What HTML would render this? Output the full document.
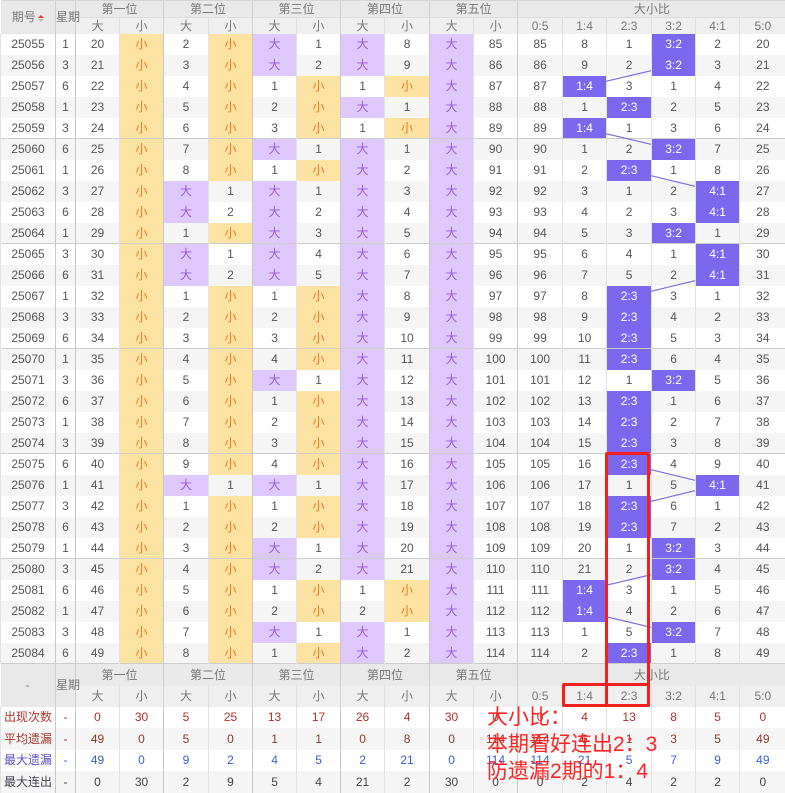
<!DOCTYPE html>
<html><head><meta charset="utf-8"><style>
*{margin:0;padding:0;box-sizing:border-box}
body{width:785px;height:791px;overflow:hidden;background:#fff;font-family:"Liberation Sans","Noto Sans CJK SC",sans-serif;font-size:12px;color:#555;position:relative}
table{border-collapse:collapse;table-layout:fixed;width:785px;position:absolute;left:0;top:0}
td,th{padding:0;text-align:center;white-space:nowrap;overflow:visible;font-weight:normal;border-left:1px solid #e2e2e2;line-height:14px}
thead th,.fh th{background:#e9e9e9;color:#777;border-left:1px solid #cfcfcf}
.h1 th{height:17px;border-top:1px solid #d5d5d5}
.h2 th{height:16px;background:#efefef;border-left:1px solid #dedede;border-top:1px solid #dcdcdc}
.h2 th.L{border-left:1px solid #cfcfcf}
tbody tr{height:21px}
tbody tr:nth-child(even){background:#f5f5f5}
tbody tr.s td{border-top:1px solid #cdcdcd}
tbody td:nth-child(2),tbody td:nth-child(3),tbody td:nth-child(5),tbody td:nth-child(7),tbody td:nth-child(9),tbody td:nth-child(11),tbody td:nth-child(13){border-left:1px solid #c8c8c8}
td.y{background:#fde3a2;color:#f0781e}
td.p{background:#dfc8fb;color:#9a5ad8}
td.b{background:#7b68ee;color:#fff}
.fh th{height:22px}
.fh2 th{height:21px;background:#efefef}
.st tr{height:21.5px}
.st td{height:21.5px}
.st tr:nth-child(even){background:#f5f5f5}
.r1 td{color:#b0302a}.r2 td{color:#8b3a2a}.r3 td{color:#3a5fcd}.r4 td{color:#444}
.r1 td:first-child,.r2 td:first-child{color:#a8362c}.r3 td:first-child{color:#5a50c0}.r4 td:first-child{color:#445}
.sort{display:inline-block;width:6px;vertical-align:middle;margin-left:2px;line-height:0}
.sort i{display:block;width:0;height:0;border-left:3px solid transparent;border-right:3px solid transparent}
.redbox{position:absolute;border:3px solid #f32020;border-radius:2px}
.note{position:absolute;left:487px;top:704px;color:#ff2424;font-size:21px;line-height:27px;font-family:"Liberation Sans","Noto Sans CJK SC",sans-serif}
svg{position:absolute;left:0;top:0}
</style></head><body>
<table>
<colgroup><col style="width:55px"><col style="width:20px"><col style="width:44px"><col style="width:44px"><col style="width:45px"><col style="width:44px"><col style="width:44px"><col style="width:44px"><col style="width:44px"><col style="width:45px"><col style="width:44px"><col style="width:44px"><col style="width:45px"><col style="width:44px"><col style="width:45px"><col style="width:44px"><col style="width:44px"><col style="width:46px"></colgroup>
<thead>
<tr class="h1"><th rowspan="2" style="border-left:none">期号<span class="sort"><i style="border-bottom:3px solid #e33;margin-bottom:1px"></i><i style="border-top:3px solid #bbb"></i></span></th><th rowspan="2">星期</th><th colspan="2">第一位</th><th colspan="2">第二位</th><th colspan="2">第三位</th><th colspan="2">第四位</th><th colspan="2">第五位</th><th colspan="6">大小比</th></tr>
<tr class="h2"><th class="L">大</th><th>小</th><th class="L">大</th><th>小</th><th class="L">大</th><th>小</th><th class="L">大</th><th>小</th><th class="L">大</th><th>小</th><th class="L">0:5</th><th>1:4</th><th>2:3</th><th>3:2</th><th>4:1</th><th>5:0</th></tr>
</thead>
<tbody>
<tr><td>25055</td><td>1</td><td>20</td><td class="y">小</td><td>2</td><td class="y">小</td><td class="p">大</td><td>1</td><td class="p">大</td><td>8</td><td class="p">大</td><td>85</td><td>85</td><td>8</td><td>1</td><td class="b">3:2</td><td>2</td><td>20</td></tr>
<tr><td>25056</td><td>3</td><td>21</td><td class="y">小</td><td>3</td><td class="y">小</td><td class="p">大</td><td>2</td><td class="p">大</td><td>9</td><td class="p">大</td><td>86</td><td>86</td><td>9</td><td>2</td><td class="b">3:2</td><td>3</td><td>21</td></tr>
<tr><td>25057</td><td>6</td><td>22</td><td class="y">小</td><td>4</td><td class="y">小</td><td>1</td><td class="y">小</td><td>1</td><td class="y">小</td><td class="p">大</td><td>87</td><td>87</td><td class="b">1:4</td><td>3</td><td>1</td><td>4</td><td>22</td></tr>
<tr><td>25058</td><td>1</td><td>23</td><td class="y">小</td><td>5</td><td class="y">小</td><td>2</td><td class="y">小</td><td class="p">大</td><td>1</td><td class="p">大</td><td>88</td><td>88</td><td>1</td><td class="b">2:3</td><td>2</td><td>5</td><td>23</td></tr>
<tr><td>25059</td><td>3</td><td>24</td><td class="y">小</td><td>6</td><td class="y">小</td><td>3</td><td class="y">小</td><td>1</td><td class="y">小</td><td class="p">大</td><td>89</td><td>89</td><td class="b">1:4</td><td>1</td><td>3</td><td>6</td><td>24</td></tr>
<tr class="s"><td>25060</td><td>6</td><td>25</td><td class="y">小</td><td>7</td><td class="y">小</td><td class="p">大</td><td>1</td><td class="p">大</td><td>1</td><td class="p">大</td><td>90</td><td>90</td><td>1</td><td>2</td><td class="b">3:2</td><td>7</td><td>25</td></tr>
<tr><td>25061</td><td>1</td><td>26</td><td class="y">小</td><td>8</td><td class="y">小</td><td>1</td><td class="y">小</td><td class="p">大</td><td>2</td><td class="p">大</td><td>91</td><td>91</td><td>2</td><td class="b">2:3</td><td>1</td><td>8</td><td>26</td></tr>
<tr><td>25062</td><td>3</td><td>27</td><td class="y">小</td><td class="p">大</td><td>1</td><td class="p">大</td><td>1</td><td class="p">大</td><td>3</td><td class="p">大</td><td>92</td><td>92</td><td>3</td><td>1</td><td>2</td><td class="b">4:1</td><td>27</td></tr>
<tr><td>25063</td><td>6</td><td>28</td><td class="y">小</td><td class="p">大</td><td>2</td><td class="p">大</td><td>2</td><td class="p">大</td><td>4</td><td class="p">大</td><td>93</td><td>93</td><td>4</td><td>2</td><td>3</td><td class="b">4:1</td><td>28</td></tr>
<tr><td>25064</td><td>1</td><td>29</td><td class="y">小</td><td>1</td><td class="y">小</td><td class="p">大</td><td>3</td><td class="p">大</td><td>5</td><td class="p">大</td><td>94</td><td>94</td><td>5</td><td>3</td><td class="b">3:2</td><td>1</td><td>29</td></tr>
<tr class="s"><td>25065</td><td>3</td><td>30</td><td class="y">小</td><td class="p">大</td><td>1</td><td class="p">大</td><td>4</td><td class="p">大</td><td>6</td><td class="p">大</td><td>95</td><td>95</td><td>6</td><td>4</td><td>1</td><td class="b">4:1</td><td>30</td></tr>
<tr><td>25066</td><td>6</td><td>31</td><td class="y">小</td><td class="p">大</td><td>2</td><td class="p">大</td><td>5</td><td class="p">大</td><td>7</td><td class="p">大</td><td>96</td><td>96</td><td>7</td><td>5</td><td>2</td><td class="b">4:1</td><td>31</td></tr>
<tr><td>25067</td><td>1</td><td>32</td><td class="y">小</td><td>1</td><td class="y">小</td><td>1</td><td class="y">小</td><td class="p">大</td><td>8</td><td class="p">大</td><td>97</td><td>97</td><td>8</td><td class="b">2:3</td><td>3</td><td>1</td><td>32</td></tr>
<tr><td>25068</td><td>3</td><td>33</td><td class="y">小</td><td>2</td><td class="y">小</td><td>2</td><td class="y">小</td><td class="p">大</td><td>9</td><td class="p">大</td><td>98</td><td>98</td><td>9</td><td class="b">2:3</td><td>4</td><td>2</td><td>33</td></tr>
<tr><td>25069</td><td>6</td><td>34</td><td class="y">小</td><td>3</td><td class="y">小</td><td>3</td><td class="y">小</td><td class="p">大</td><td>10</td><td class="p">大</td><td>99</td><td>99</td><td>10</td><td class="b">2:3</td><td>5</td><td>3</td><td>34</td></tr>
<tr class="s"><td>25070</td><td>1</td><td>35</td><td class="y">小</td><td>4</td><td class="y">小</td><td>4</td><td class="y">小</td><td class="p">大</td><td>11</td><td class="p">大</td><td>100</td><td>100</td><td>11</td><td class="b">2:3</td><td>6</td><td>4</td><td>35</td></tr>
<tr><td>25071</td><td>3</td><td>36</td><td class="y">小</td><td>5</td><td class="y">小</td><td class="p">大</td><td>1</td><td class="p">大</td><td>12</td><td class="p">大</td><td>101</td><td>101</td><td>12</td><td>1</td><td class="b">3:2</td><td>5</td><td>36</td></tr>
<tr><td>25072</td><td>6</td><td>37</td><td class="y">小</td><td>6</td><td class="y">小</td><td>1</td><td class="y">小</td><td class="p">大</td><td>13</td><td class="p">大</td><td>102</td><td>102</td><td>13</td><td class="b">2:3</td><td>1</td><td>6</td><td>37</td></tr>
<tr><td>25073</td><td>1</td><td>38</td><td class="y">小</td><td>7</td><td class="y">小</td><td>2</td><td class="y">小</td><td class="p">大</td><td>14</td><td class="p">大</td><td>103</td><td>103</td><td>14</td><td class="b">2:3</td><td>2</td><td>7</td><td>38</td></tr>
<tr><td>25074</td><td>3</td><td>39</td><td class="y">小</td><td>8</td><td class="y">小</td><td>3</td><td class="y">小</td><td class="p">大</td><td>15</td><td class="p">大</td><td>104</td><td>104</td><td>15</td><td class="b">2:3</td><td>3</td><td>8</td><td>39</td></tr>
<tr class="s"><td>25075</td><td>6</td><td>40</td><td class="y">小</td><td>9</td><td class="y">小</td><td>4</td><td class="y">小</td><td class="p">大</td><td>16</td><td class="p">大</td><td>105</td><td>105</td><td>16</td><td class="b">2:3</td><td>4</td><td>9</td><td>40</td></tr>
<tr><td>25076</td><td>1</td><td>41</td><td class="y">小</td><td class="p">大</td><td>1</td><td class="p">大</td><td>1</td><td class="p">大</td><td>17</td><td class="p">大</td><td>106</td><td>106</td><td>17</td><td>1</td><td>5</td><td class="b">4:1</td><td>41</td></tr>
<tr><td>25077</td><td>3</td><td>42</td><td class="y">小</td><td>1</td><td class="y">小</td><td>1</td><td class="y">小</td><td class="p">大</td><td>18</td><td class="p">大</td><td>107</td><td>107</td><td>18</td><td class="b">2:3</td><td>6</td><td>1</td><td>42</td></tr>
<tr><td>25078</td><td>6</td><td>43</td><td class="y">小</td><td>2</td><td class="y">小</td><td>2</td><td class="y">小</td><td class="p">大</td><td>19</td><td class="p">大</td><td>108</td><td>108</td><td>19</td><td class="b">2:3</td><td>7</td><td>2</td><td>43</td></tr>
<tr><td>25079</td><td>1</td><td>44</td><td class="y">小</td><td>3</td><td class="y">小</td><td class="p">大</td><td>1</td><td class="p">大</td><td>20</td><td class="p">大</td><td>109</td><td>109</td><td>20</td><td>1</td><td class="b">3:2</td><td>3</td><td>44</td></tr>
<tr class="s"><td>25080</td><td>3</td><td>45</td><td class="y">小</td><td>4</td><td class="y">小</td><td class="p">大</td><td>2</td><td class="p">大</td><td>21</td><td class="p">大</td><td>110</td><td>110</td><td>21</td><td>2</td><td class="b">3:2</td><td>4</td><td>45</td></tr>
<tr><td>25081</td><td>6</td><td>46</td><td class="y">小</td><td>5</td><td class="y">小</td><td>1</td><td class="y">小</td><td>1</td><td class="y">小</td><td class="p">大</td><td>111</td><td>111</td><td class="b">1:4</td><td>3</td><td>1</td><td>5</td><td>46</td></tr>
<tr><td>25082</td><td>1</td><td>47</td><td class="y">小</td><td>6</td><td class="y">小</td><td>2</td><td class="y">小</td><td>2</td><td class="y">小</td><td class="p">大</td><td>112</td><td>112</td><td class="b">1:4</td><td>4</td><td>2</td><td>6</td><td>47</td></tr>
<tr><td>25083</td><td>3</td><td>48</td><td class="y">小</td><td>7</td><td class="y">小</td><td class="p">大</td><td>1</td><td class="p">大</td><td>1</td><td class="p">大</td><td>113</td><td>113</td><td>1</td><td>5</td><td class="b">3:2</td><td>7</td><td>48</td></tr>
<tr><td>25084</td><td>6</td><td>49</td><td class="y">小</td><td>8</td><td class="y">小</td><td>1</td><td class="y">小</td><td class="p">大</td><td>2</td><td class="p">大</td><td>114</td><td>114</td><td>2</td><td class="b">2:3</td><td>1</td><td>8</td><td>49</td></tr>
</tbody>
<tbody class="fhb">
<tr class="fh"><th rowspan="2" style="border-left:none;border-top:1px solid #ccc">-</th><th rowspan="2" style="border-top:1px solid #ccc">星期</th><th colspan="2" style="border-top:1px solid #ccc">第一位</th><th colspan="2" style="border-top:1px solid #ccc">第二位</th><th colspan="2" style="border-top:1px solid #ccc">第三位</th><th colspan="2" style="border-top:1px solid #ccc">第四位</th><th colspan="2" style="border-top:1px solid #ccc">第五位</th><th colspan="6" style="border-top:1px solid #ccc">大小比</th></tr>
<tr class="fh fh2"><th>大</th><th style="border-left-color:#dedede">小</th><th>大</th><th style="border-left-color:#dedede">小</th><th>大</th><th style="border-left-color:#dedede">小</th><th>大</th><th style="border-left-color:#dedede">小</th><th>大</th><th style="border-left-color:#dedede">小</th><th>0:5</th><th style="border-left-color:#dedede">1:4</th><th style="border-left-color:#dedede">2:3</th><th style="border-left-color:#dedede">3:2</th><th style="border-left-color:#dedede">4:1</th><th style="border-left-color:#dedede">5:0</th></tr>
</tbody>
<tbody class="st">
<tr class="r1"><td>出现次数</td><td>-</td><td>0</td><td>30</td><td>5</td><td>25</td><td>13</td><td>17</td><td>26</td><td>4</td><td>30</td><td>0</td><td>0</td><td>4</td><td>13</td><td>8</td><td>5</td><td>0</td></tr>
<tr class="r2"><td>平均遗漏</td><td>-</td><td>49</td><td>0</td><td>5</td><td>0</td><td>1</td><td>1</td><td>0</td><td>8</td><td>0</td><td>114</td><td>114</td><td>6</td><td>1</td><td>3</td><td>5</td><td>49</td></tr>
<tr class="r3"><td>最大遗漏</td><td>-</td><td>49</td><td>0</td><td>9</td><td>2</td><td>4</td><td>5</td><td>2</td><td>21</td><td>0</td><td>114</td><td>114</td><td>21</td><td>5</td><td>7</td><td>9</td><td>49</td></tr>
<tr class="r4"><td>最大连出</td><td>-</td><td>0</td><td>30</td><td>2</td><td>9</td><td>5</td><td>4</td><td>21</td><td>2</td><td>30</td><td>0</td><td>0</td><td>2</td><td>4</td><td>2</td><td>2</td><td>0</td></tr>
</tbody>
</table>
<svg width="785" height="791" viewBox="0 0 785 791">
<g stroke="#7a70d8" stroke-width="1.2" fill="none">
<line x1="651" y1="70.7" x2="606" y2="81.3"/>
<line x1="606" y1="133.7" x2="651" y2="144.3"/>
<line x1="651" y1="175.7" x2="695" y2="186.3"/>
<line x1="695" y1="280.7" x2="651" y2="291.3"/>
<line x1="651" y1="469.7" x2="695" y2="480.3"/>
<line x1="695" y1="490.7" x2="651" y2="501.3"/>
<line x1="651" y1="574.7" x2="606" y2="585.3"/>
<line x1="606" y1="616.7" x2="651" y2="627.3"/>
</g>
</svg>
<div class="redbox" style="left:605px;top:452px;width:45px;height:255px"></div>
<div class="redbox" style="left:562px;top:683px;width:88px;height:24px"></div>
<div class="note">大小比：<br>本期看好连出2：3<br>防遗漏2期的1：4</div>
</body></html>
